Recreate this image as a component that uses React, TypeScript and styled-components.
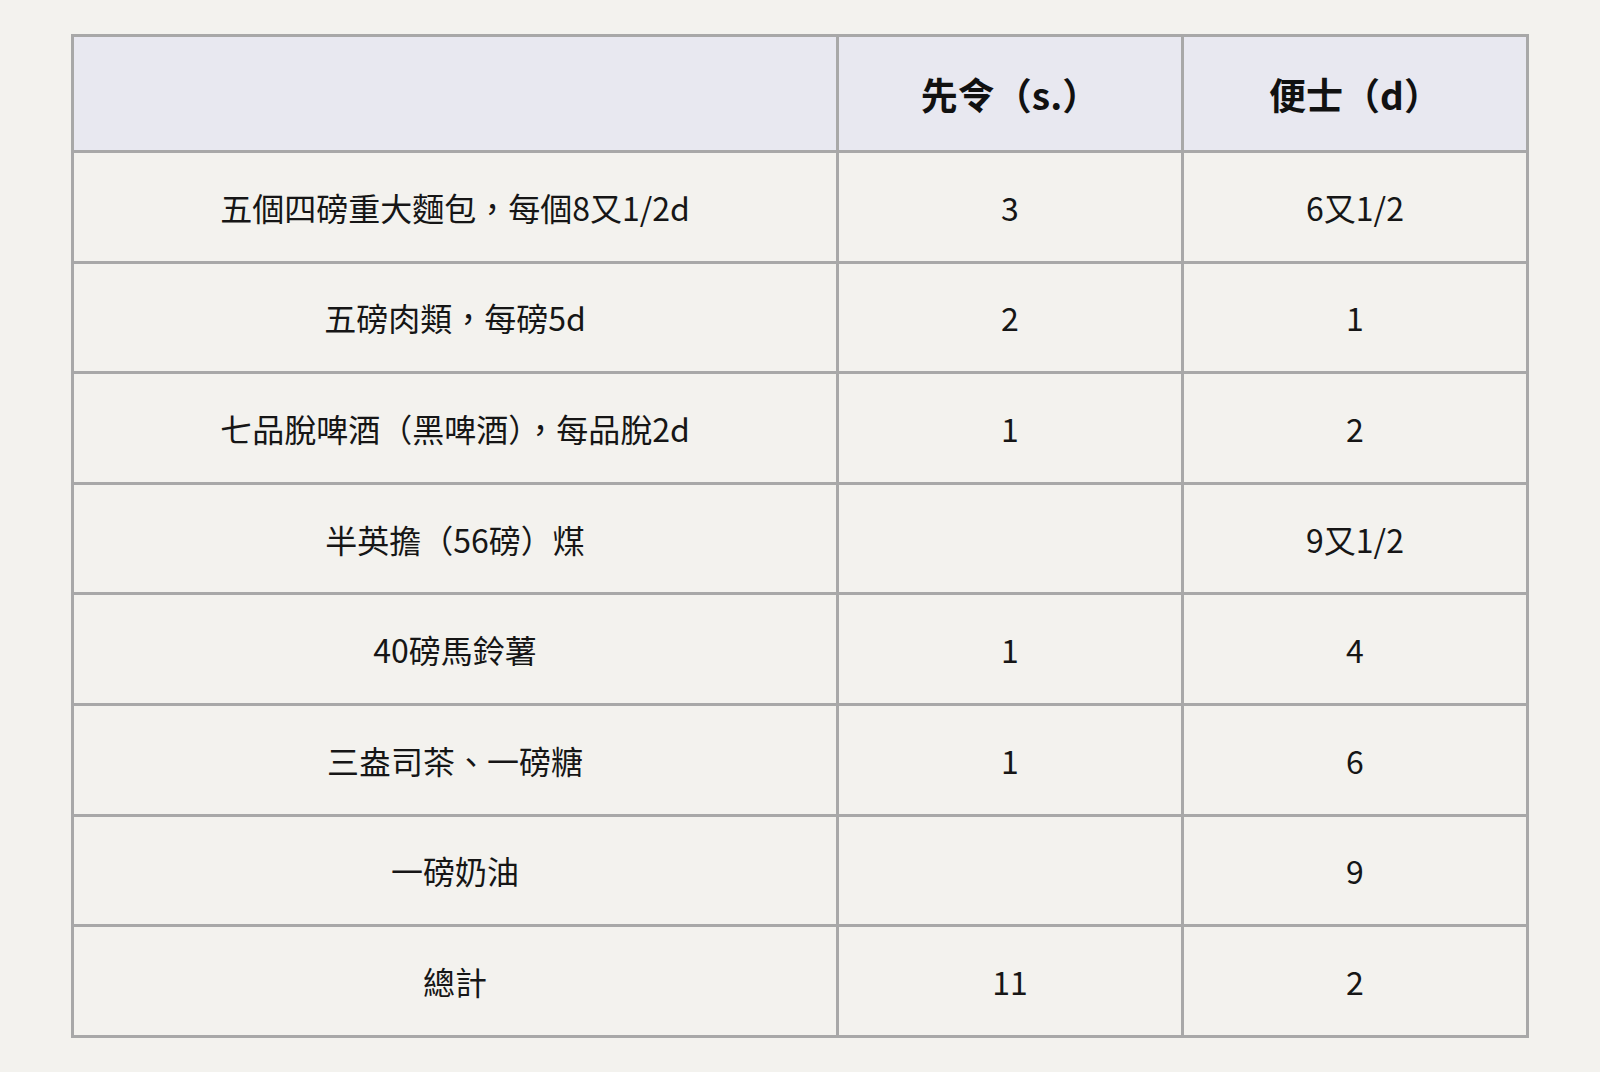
import React from 'react'
import styled, { createGlobalStyle } from 'styled-components'

const GlobalStyle = createGlobalStyle`
  html, body {
    margin: 0;
    padding: 0;
    background: #f3f2ee;
  }
  body {
    font-family: "Noto Sans CJK TC", "Noto Sans", sans-serif;
    color: #161616;
  }
`

interface Row {
  item: string
  shillings: string
  pence: string
}

const rows: Row[] = [
  { item: '五個四磅重大麵包，每個8又1/2d', shillings: '3', pence: '6又1/2' },
  { item: '五磅肉類，每磅5d', shillings: '2', pence: '1' },
  { item: '七品脫啤酒（黑啤酒），每品脫2d', shillings: '1', pence: '2' },
  { item: '半英擔（56磅）煤', shillings: '', pence: '9又1/2' },
  { item: '40磅馬鈴薯', shillings: '1', pence: '4' },
  { item: '三盎司茶、一磅糖', shillings: '1', pence: '6' },
  { item: '一磅奶油', shillings: '', pence: '9' },
  { item: '總計', shillings: '11', pence: '2' },
]

const Page = styled.div`
  padding: 34px 71px 34px;
`

const Table = styled.table`
  width: 1458px;
  border-collapse: collapse;
  table-layout: fixed;
  border: 3px solid #a8a8a8;
`

const HeadCell = styled.th`
  background: #e8e8f0;
  border: 3px solid #a8a8a8;
  height: 113px;
  padding: 0;
  font-size: 37px;
  font-weight: 700;
  text-align: center;
  vertical-align: middle;
  color: #111;
`

const Cell = styled.td`
  border: 3px solid #a8a8a8;
  height: 107.6px;
  padding: 0;
  font-size: 32px;
  font-weight: 400;
  text-align: center;
  vertical-align: middle;
`

export default function App() {
  return (
    <Page>
      <GlobalStyle />
      <Table>
        <colgroup>
          <col style={{ width: 765 }} />
          <col style={{ width: 345 }} />
          <col style={{ width: 345 }} />
        </colgroup>
        <thead>
          <tr>
            <HeadCell></HeadCell>
            <HeadCell>先令（s.）</HeadCell>
            <HeadCell>便士（d）</HeadCell>
          </tr>
        </thead>
        <tbody>
          {rows.map((r) => (
            <tr key={r.item}>
              <Cell>{r.item}</Cell>
              <Cell>{r.shillings}</Cell>
              <Cell>{r.pence}</Cell>
            </tr>
          ))}
        </tbody>
      </Table>
    </Page>
  )
}
